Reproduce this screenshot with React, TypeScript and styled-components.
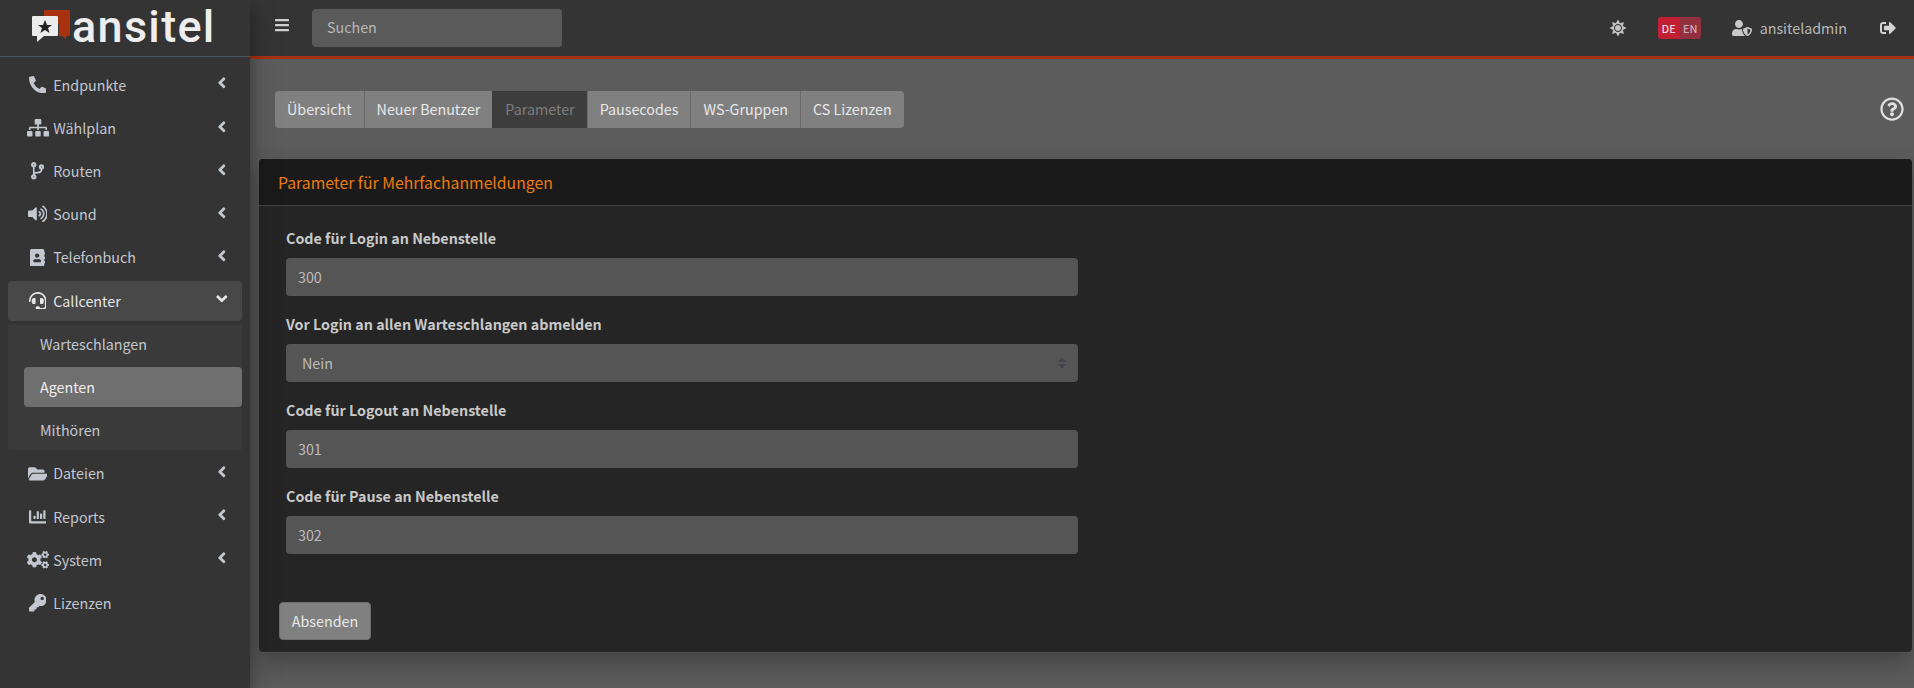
import React from "react";
import styled, { createGlobalStyle } from "styled-components";
import {
  FaPhoneAlt, FaSitemap, FaCodeBranch, FaVolumeUp, FaAddressBook, FaHeadset, FaFolderOpen,
  FaChartBar, FaCogs, FaKey, FaAngleLeft, FaAngleDown, FaBars, FaSun, FaUserShield, FaSignOutAlt, FaRegQuestionCircle,
} from "react-icons/fa";

const font = `"Noto Sans CJK SC", "Noto Sans", sans-serif`;
const fs = "14.3px";

const Global = createGlobalStyle`
  html, body { margin: 0; padding: 0; height: 100%; background: #5c5c5c; overflow: hidden; }
  #root { height: 100%; }
  * { box-sizing: border-box; }
  body { font-family: ${font}; font-size: ${fs}; color: #ccc; }
`;

const Page = styled.div`display: flex; width: 1914px; height: 688px; overflow: hidden;`;

const Sidebar = styled.aside`
  flex: 0 0 250px; background: #343434; position: relative; z-index: 2;
  box-shadow: 0 14px 28px rgba(0,0,0,.25), 0 10px 10px rgba(0,0,0,.22);
`;
const Brand = styled.div`
  height: 57px; border-bottom: 1px solid #4b545c; display: flex; align-items: flex-start;
  padding: 10px 0 0 32px; gap: 2px;
`;
const BrandName = styled.span`
  font-family: Roboto, sans-serif; font-weight: 500; font-size: 45px; line-height: 34px;
  color: #eeeeee; letter-spacing: 1.3px;
`;
const Nav = styled.nav`padding: 7.7px 8px 0; display: flex; flex-direction: column;`;
const Item = styled.div<{ $open?: boolean }>`
  height: 40px; margin-bottom: 3.2px; border-radius: 4px; display: flex; align-items: center;
  padding: 0 16px 0 18px; font-size: ${fs}; line-height: 24px;
  color: ${p => (p.$open ? "#e6e6e6" : "#c2c7d0")};
  background: ${p => (p.$open ? "#484848" : "transparent")};
`;
const ItemIcon = styled.span<{ $open?: boolean; $w: number }>`
  flex: 0 0 27.2px; margin-left: -2px; margin-right: 2px; display: flex; justify-content: center; align-items: center;
  font-size: 17.6px; color: ${p => (p.$open ? "#e6e6e6" : "#c2c7d0")};
  svg { width: ${p => p.$w}em; height: 1em; flex: none; }
`;
const ItemLabel = styled.span`flex: 1;`;
const Caret = styled.span`display: flex; margin-top: -3px; margin-right: -5px; font-size: 17.6px;`;
const SubMenu = styled.div`background: #3a3a3a; margin-bottom: 3.2px; border-radius: 0 0 2px 2px;`;
const SubItem = styled.div<{ $active?: boolean }>`
  height: 40px; margin: 0 0 3.2px 16px; padding: 0 16px; border-radius: 4px; display: flex; align-items: center;
  font-size: ${fs}; line-height: 24px;
  color: ${p => (p.$active ? "#f0f0f0" : "#c2c7d0")};
  background: ${p => (p.$active ? "#6f6f6f" : "transparent")};
  &:last-child { margin-bottom: 0; }
`;

const Main = styled.div`flex: 1; min-width: 0; display: flex; flex-direction: column; background: #5c5c5c;`;
const Topbar = styled.header`
  height: 59px; background: #343434; border-bottom: 3px solid #a8320f; display: flex; align-items: center;
  padding: 0 18px 0 24px; color: #c8c8c8;
`;
const Burger = styled.span`display: flex; font-size: 16px; margin-top: -6px; color: #d0d0d0;`;
const Search = styled.div`
  margin-left: 22px; width: 250px; height: 38px; border-radius: 4px; background: #5a5a5a; margin-top: -1px;
  padding: 0 15px 2px; display: flex; align-items: center; color: #b8b8b8; font-size: ${fs};
`;
const Spacer = styled.div`flex: 1;`;
const SunIcon = styled.span`display: flex; font-size: 16px; margin-right: 32px; color: #c4c4c4;`;
const Lang = styled.div`display: flex; height: 22px; border-radius: 3px; overflow: hidden; font-size: 11px; line-height: 22px; margin-right: 31px;`;
const LangPart = styled.span<{ $on?: boolean }>`
  width: ${p => (p.$on ? "22px" : "21px")}; text-align: center;
  background: ${p => (p.$on ? "#c21f35" : "#93303f")};
  color: ${p => (p.$on ? "#f4f4f4" : "#d8c0c4")};
`;
const UserIcon = styled.span`
  display: flex; font-size: 16px; margin-right: 8px; color: #c8c8c8;
  svg { width: 1.25em; height: 1em; }
`;
const UserName = styled.span`font-size: ${fs}; line-height: 24px; color: #b8b8b8; margin-right: 33px;`;
const Logout = styled.span`display: flex; font-size: 16px; color: #d4d4d4;`;

const Content = styled.div`flex: 1; min-height: 0; padding: 32px 2px 0 9px; display: flex; flex-direction: column;`;
const TabRow = styled.div`display: flex; align-items: flex-start; justify-content: space-between; padding: 0 0 0 16px; height: 68px;`;
const Tabs = styled.div`display: flex; height: 37px; border-radius: 4px;`;
const Tab = styled.div<{ $active?: boolean }>`
  padding: 0 12px 2px; display: flex; align-items: center; font-size: ${fs}; height: 37px;
  color: ${p => (p.$active ? "#7d7d7d" : "#e8e8e8")};
  background: ${p => (p.$active ? "#3d3d3d" : "#808080")};
  border-left: 1px solid ${p => (p.$active ? "#3d3d3d" : "#6a6a6a")};
  &:first-child { border-left: 0; border-radius: 4px 0 0 4px; }
  &:last-child { border-radius: 0 4px 4px 0; }
`;
const Help = styled.span`display: flex; font-size: 24px; color: #e0e0e0; margin: 6px 8px 0 0;`;

const Card = styled.section`
  background: #252525; border-radius: 4px; height: 493px; display: flex; flex-direction: column;
  box-shadow: 0 0 0 1px rgba(255,255,255,.04), 0 10px 24px rgba(0,0,0,.3);
`;
const CardHeader = styled.div`
  height: 47px; background: #1a1a1a; border-bottom: 1px solid #444; border-radius: 4px 4px 0 0;
  padding: 0 19px; display: flex; align-items: center; font-size: 15.75px; color: #eb7a12;
`;
const CardBody = styled.div`padding: 20px 27px 0; flex: 1;`;
const Field = styled.div`height: 86px; width: 792px;`;
const Label = styled.div`font-weight: 700; font-size: ${fs}; line-height: 24px; color: #c9c9c9; height: 32px;`;
const Control = styled.div`
  height: 38px; border-radius: 4px; background: #555555; display: flex; align-items: center;
  justify-content: space-between; padding: 0 12px 2px; color: #bcbcbc; font-size: ${fs};
`;
const SelectControl = styled(Control)`padding: 0 11px 2px 16px; svg { margin-top: 2px; }`;
const Footer = styled.div`padding: 0 20px 12px;`;
const Submit = styled.div`
  width: 92px; height: 38px; border-radius: 4px; background: #808080; border: 1px solid #6e6e6e; padding-bottom: 2px;
  display: flex; align-items: center; justify-content: center; color: #e8e8e8; font-size: ${fs};
`;

const Logo = () => (
  <svg width="38" height="32" viewBox="0 0 38 32" style={{ flex: "none" }}>
    <path d="M12 0h25q1 0 1 1v24q0 1-1 1h-3v3l-4-3h-3V14H12z" fill="#a8320f" />
    <path d="M1 6h24q1 0 1 1v18q0 1-1 1H12l-7 6v-6H1q-1 0-1-1V7q0-1 1-1z" fill="#ececec" />
    <path d="M13 10l2 5h5l-4 3 1.600 5-4.600-3-4.600 3L10 18l-4-3h5z" fill="#222" />
  </svg>
);

const nav1 = [
  { I: FaPhoneAlt, t: "Endpunkte", w: 1 }, { I: FaSitemap, t: "Wählplan", w: 1.25 }, { I: FaCodeBranch, t: "Routen", w: 0.75 },
  { I: FaVolumeUp, t: "Sound", w: 1.125 }, { I: FaAddressBook, t: "Telefonbuch", w: 0.875 },
];
const nav2 = [
  { I: FaFolderOpen, t: "Dateien", w: 1.125 }, { I: FaChartBar, t: "Reports", w: 1 }, { I: FaCogs, t: "System", w: 1.25 },
];

export default function App() {
  return (
    <Page>
      <Global />
      <Sidebar>
        <Brand><Logo /><BrandName>ansitel</BrandName></Brand>
        <Nav>
          {nav1.map(({ I, t, w }) => (
            <Item key={t}><ItemIcon $w={w}><I /></ItemIcon><ItemLabel>{t}</ItemLabel><Caret><FaAngleLeft /></Caret></Item>
          ))}
          <Item $open><ItemIcon $open $w={1}><FaHeadset /></ItemIcon><ItemLabel>Callcenter</ItemLabel><Caret><FaAngleDown /></Caret></Item>
          <SubMenu>
            <SubItem>Warteschlangen</SubItem>
            <SubItem $active>Agenten</SubItem>
            <SubItem>Mithören</SubItem>
          </SubMenu>
          {nav2.map(({ I, t, w }) => (
            <Item key={t}><ItemIcon $w={w}><I /></ItemIcon><ItemLabel>{t}</ItemLabel><Caret><FaAngleLeft /></Caret></Item>
          ))}
          <Item><ItemIcon $w={1}><FaKey /></ItemIcon><ItemLabel>Lizenzen</ItemLabel></Item>
        </Nav>
      </Sidebar>
      <Main>
        <Topbar>
          <Burger><FaBars /></Burger>
          <Search>Suchen</Search>
          <Spacer />
          <SunIcon><FaSun /></SunIcon>
          <Lang><LangPart $on>DE</LangPart><LangPart>EN</LangPart></Lang>
          <UserIcon><FaUserShield /></UserIcon>
          <UserName>ansiteladmin</UserName>
          <Logout><FaSignOutAlt /></Logout>
        </Topbar>
        <Content>
          <TabRow>
            <Tabs>
              <Tab>Übersicht</Tab>
              <Tab>Neuer Benutzer</Tab>
              <Tab $active>Parameter</Tab>
              <Tab>Pausecodes</Tab>
              <Tab>WS-Gruppen</Tab>
              <Tab>CS Lizenzen</Tab>
            </Tabs>
            <Help><FaRegQuestionCircle /></Help>
          </TabRow>
          <Card>
            <CardHeader>Parameter für Mehrfachanmeldungen</CardHeader>
            <CardBody>
              <Field><Label>Code für Login an Nebenstelle</Label><Control>300</Control></Field>
              <Field>
                <Label>Vor Login an allen Warteschlangen abmelden</Label>
                <SelectControl>
                  Nein
                  <svg width="10" height="12" viewBox="0 0 10 12"><path d="M5 0.500l4 4.500H1zM5 11.500L1 7h8z" fill="#42454d" /></svg>
                </SelectControl>
              </Field>
              <Field><Label>Code für Logout an Nebenstelle</Label><Control>301</Control></Field>
              <Field><Label>Code für Pause an Nebenstelle</Label><Control>302</Control></Field>
            </CardBody>
            <Footer><Submit>Absenden</Submit></Footer>
          </Card>
        </Content>
      </Main>
    </Page>
  );
}
